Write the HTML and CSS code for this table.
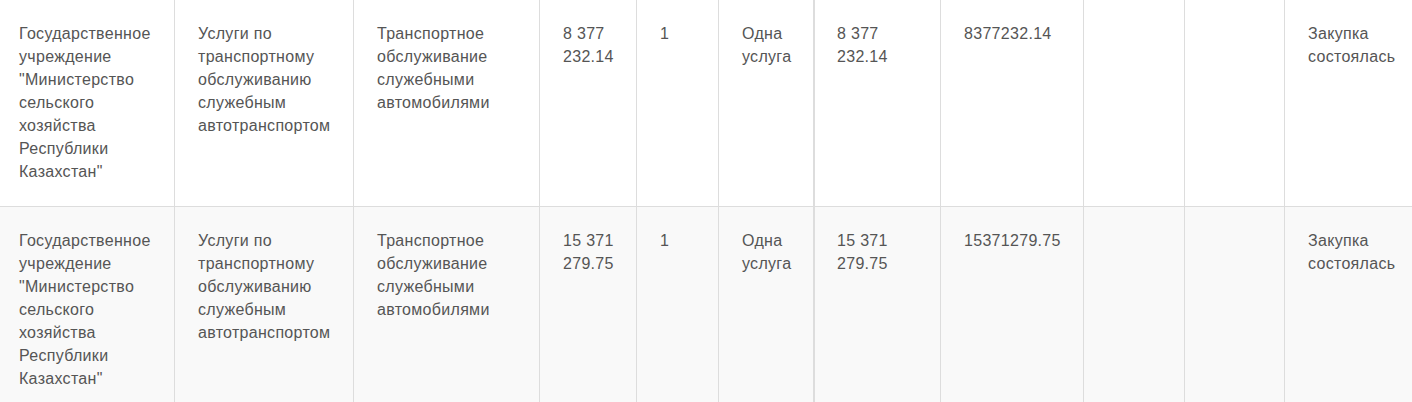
FILE: index.html
```html
<!DOCTYPE html>
<html lang="ru">
<head>
<meta charset="utf-8">
<link rel="stylesheet" href="styles.css">
</head>
<body>
<table class="grid">
  <colgroup>
    <col class="c1"><col class="c2"><col class="c3"><col class="c4"><col class="c5"><col class="c6"><col class="c7"><col class="c8"><col class="c9"><col class="c10"><col class="c11">
  </colgroup>
  <tbody>
    <tr class="row">
      <td>Государственное учреждение "Министерство сельского хозяйства Республики Казахстан"</td>
      <td>Услуги по транспортному обслуживанию служебным автотранспортом</td>
      <td>Транспортное обслуживание служебными автомобилями</td>
      <td>8 377 232.14</td>
      <td>1</td>
      <td>Одна услуга</td>
      <td class="split">8 377 232.14</td>
      <td>8377232.14</td>
      <td></td>
      <td></td>
      <td>Закупка состоялась</td>
    </tr>
    <tr class="row striped">
      <td>Государственное учреждение "Министерство сельского хозяйства Республики Казахстан"</td>
      <td>Услуги по транспортному обслуживанию служебным автотранспортом</td>
      <td>Транспортное обслуживание служебными автомобилями</td>
      <td>15 371 279.75</td>
      <td>1</td>
      <td>Одна услуга</td>
      <td class="split">15 371 279.75</td>
      <td>15371279.75</td>
      <td></td>
      <td></td>
      <td>Закупка состоялась</td>
    </tr>
  </tbody>
</table>
</body>
</html>
```

FILE: styles.css
```css
html, body {
  margin: 0;
  padding: 0;
  background: #fff;
}
body {
  font-family: "Liberation Sans", Arial, sans-serif;
  font-size: 16px;
  line-height: 23px;
  letter-spacing: 0.3px;
  color: #555;
  overflow: hidden;
}
.grid {
  table-layout: fixed;
  width: 1412px;
  border-collapse: separate;
  border-spacing: 0;
}
.c1 { width: 174px; }
.c2 { width: 179px; }
.c3 { width: 186px; }
.c4 { width: 97px; }
.c5 { width: 82px; }
.c6 { width: 95px; }
.c7 { width: 127px; }
.c8 { width: 143px; }
.c9 { width: 101px; }
.c10 { width: 100px; }
.c11 { width: 128px; }
.grid td {
  box-sizing: border-box;
  vertical-align: top;
  padding: 22px 18px 23px 23px;
  border-left: 1px solid #ddd;
  word-wrap: break-word;
}
.grid td:first-child {
  border-left: none;
  padding-left: 19px;
}
.grid td.split {
  border-left: 2px solid #ddd;
  padding-left: 22px;
}
.grid td:last-child {
  padding-right: 0;
}
.striped td {
  background: #f9f9f9;
  border-top: 1px solid #ddd;
}
```
